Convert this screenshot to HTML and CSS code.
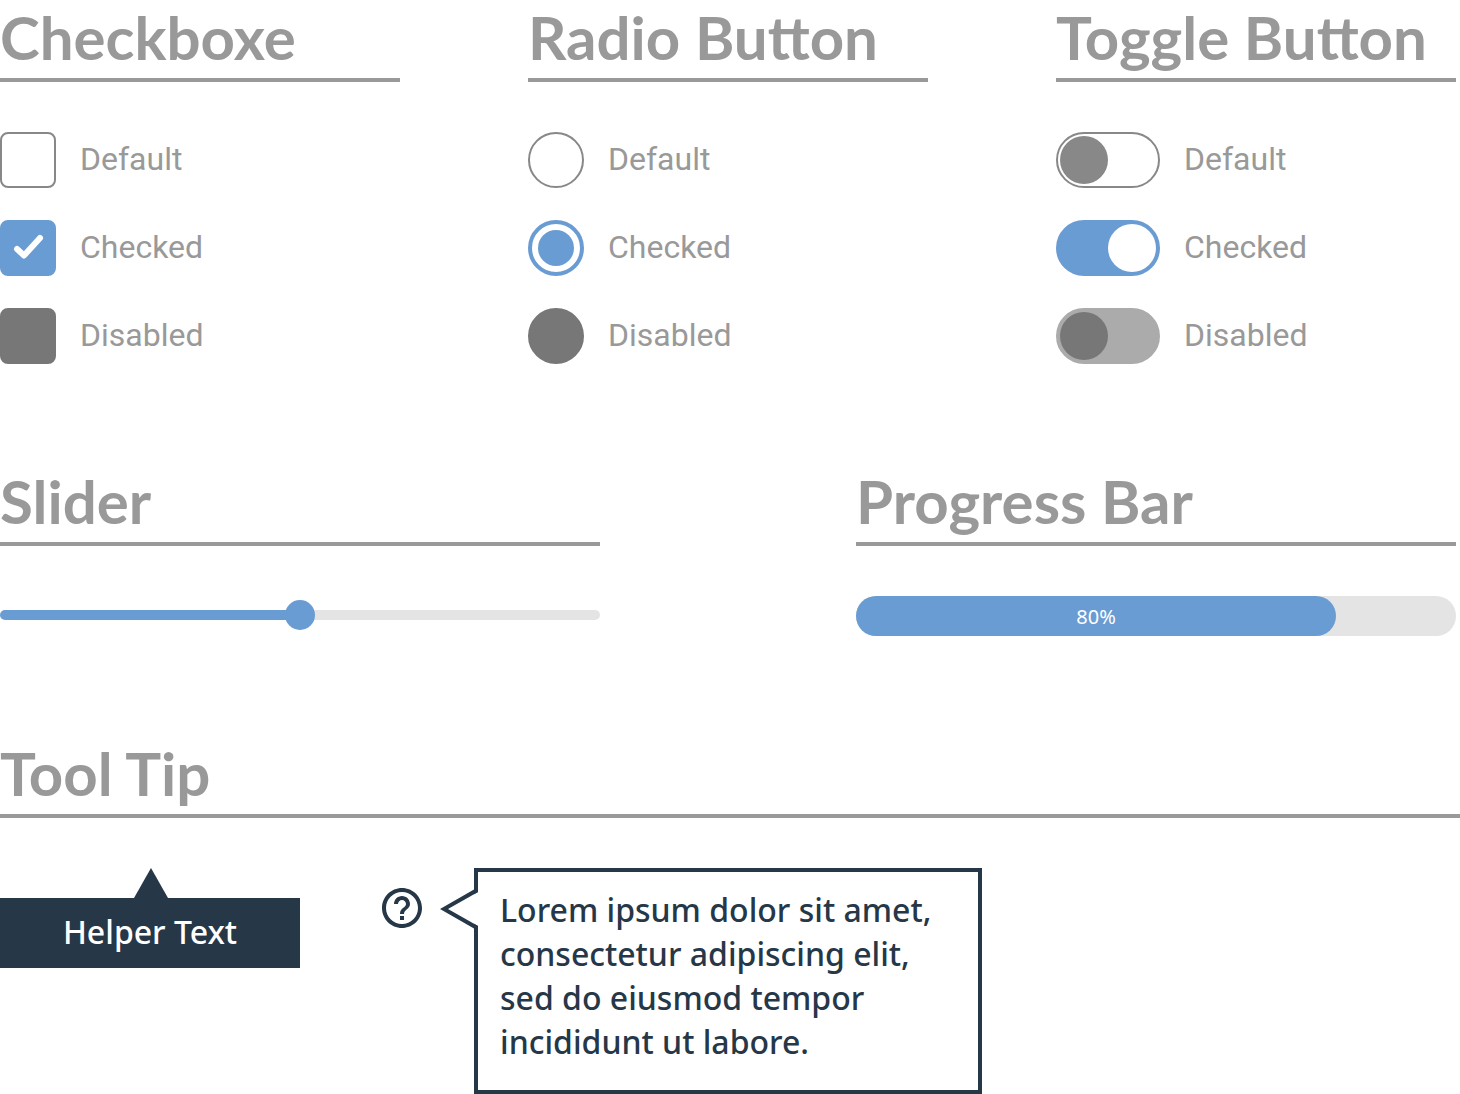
FILE: index.html
```html
<!DOCTYPE html>
<html lang="en">
<head>
  <meta charset="utf-8">
  <meta name="viewport" content="width=device-width, initial-scale=1">
  <title>Form Controls</title>
  <link rel="stylesheet" href="styles.css">
</head>
<body>
  <main class="page">
    <div class="row row-three">
      <section>
        <h2 class="heading">Checkboxe</h2>
        <div class="options">
          <label class="option"><input class="box" type="checkbox"><span>Default</span></label>
          <label class="option">
            <span class="check">
              <input class="box" type="checkbox" checked>
              <svg class="tick" viewBox="0 0 56 56" aria-hidden="true"><path d="M17 29L24 35.500L40 18"/></svg>
            </span>
            <span>Checked</span>
          </label>
          <label class="option"><input class="box" type="checkbox" disabled><span>Disabled</span></label>
        </div>
      </section>
      <section>
        <h2 class="heading">Radio Button</h2>
        <div class="options">
          <label class="option"><input class="radio" type="radio" name="choice"><span>Default</span></label>
          <label class="option"><input class="radio" type="radio" name="choice" checked><span>Checked</span></label>
          <label class="option"><input class="radio" type="radio" name="choice" disabled><span>Disabled</span></label>
        </div>
      </section>
      <section>
        <h2 class="heading">Toggle Button</h2>
        <div class="options">
          <label class="option"><input class="toggle" type="checkbox" role="switch"><span>Default</span></label>
          <label class="option"><input class="toggle" type="checkbox" role="switch" checked><span>Checked</span></label>
          <label class="option"><input class="toggle" type="checkbox" role="switch" disabled><span>Disabled</span></label>
        </div>
      </section>
    </div>

    <div class="row row-two">
      <section>
        <h2 class="heading"><label for="slider">Slider</label></h2>
        <input class="slider" id="slider" type="range" min="0" max="100" value="50">
      </section>
      <section>
        <h2 class="heading"><label for="progress">Progress Bar</label></h2>
        <div class="progress">
          <progress class="progress-bar" id="progress" max="100" value="80"></progress>
          <span class="progress-text" style="width: 80%">80%</span>
        </div>
      </section>
    </div>

    <section>
      <h2 class="heading">Tool Tip</h2>
      <div class="tips">
        <div class="helper" role="tooltip">Helper Text</div>
        <div class="help">
          <button class="help-button" type="button" aria-label="Help" aria-describedby="help-text">
            <svg class="help-icon" viewBox="2 2 20 20" aria-hidden="true"><path d="M11 18h2v-2h-2v2zm1-16C6.480 2 2 6.480 2 12s4.480 10 10 10 10-4.480 10-10S17.520 2 12 2zm0 18c-4.410 0-8-3.590-8-8s3.590-8 8-8 8 3.590 8 8-3.590 8-8 8zm0-14c-2.210 0-4 1.790-4 4h2c0-1.100.900-2 2-2s2 .900 2 2c0 2-3 1.750-3 5h2c0-2.250 3-2.500 3-5 0-2.210-1.790-4-4-4z"/></svg>
          </button>
          <div class="bubble" id="help-text" role="tooltip">
            <svg class="pointer" viewBox="0 0 38 42" aria-hidden="true">
              <path class="pointer-fill" d="M38 4L8 21L38 38z"/>
              <path class="pointer-line" d="M0 21L34 1.500H38V4L8 21L38 38V40.500H34z"/>
            </svg>
            Lorem ipsum dolor sit amet, consectetur adipiscing elit, sed do eiusmod tempor incididunt ut labore.
          </div>
        </div>
      </div>
    </section>
  </main>
</body>
</html>
```

FILE: styles.css
```css
:root {
  --grey: #999;
  --line: #888;
  --disabled: #777;
  --blue: #699cd3;
  --track: #e4e4e4;
  --navy: #263748;
}

* {
  box-sizing: border-box;
}

body {
  margin: 0;
  background: #fff;
  color: var(--grey);
  font-family: Roboto, sans-serif;
  font-size: 32px;
}

input {
  margin: 0;
}

.page {
  display: flex;
  flex-direction: column;
  gap: 100px;
}

.row {
  display: grid;
  padding-right: 4px;
}

.row-three {
  grid-template-columns: repeat(3, minmax(0, 1fr));
  gap: 128px;
}

.row-two {
  grid-template-columns: repeat(2, minmax(0, 1fr));
  gap: 256px;
}

.heading {
  margin: 0 0 50px;
  padding-bottom: 4px;
  border-bottom: 4px solid var(--grey);
  font: 700 60px/74px Lato, sans-serif;
  white-space: nowrap;
}

/* Checkboxes, radio buttons and toggles */

.options {
  display: flex;
  flex-direction: column;
  gap: 32px;
}

.option {
  display: flex;
  align-items: flex-start;
  gap: 24px;
  line-height: 54px;
}

.box,
.radio,
.toggle {
  appearance: none;
  display: block;
  flex: none;
  width: 56px;
  height: 56px;
  border: 2px solid var(--line);
  background: #fff;
}

.box {
  border-radius: 8px;
}

.box:checked {
  border-color: var(--blue);
  background: var(--blue);
}

.box:disabled,
.radio:disabled {
  border-color: var(--disabled);
  background: var(--disabled);
}

.check {
  position: relative;
}

.tick {
  position: absolute;
  inset: 0;
  fill: none;
  stroke: #fff;
  stroke-width: 6;
  stroke-linecap: round;
  stroke-linejoin: round;
  pointer-events: none;
}

.radio {
  border-radius: 50%;
}

.radio:checked {
  padding: 6px;
  border: 4px solid var(--blue);
  background: var(--blue) content-box;
}

.toggle {
  width: 104px;
  padding: 2px;
  border-radius: 28px;
}

.toggle::before {
  content: "";
  display: block;
  width: 48px;
  height: 48px;
  border-radius: 50%;
  background: var(--line);
}

.toggle:checked {
  border-color: var(--blue);
  background: var(--blue);
}

.toggle:checked::before {
  margin-left: auto;
  background: #fff;
}

.toggle:disabled {
  border-color: #ababab;
  background: #ababab;
}

.toggle:disabled::before {
  background: var(--disabled);
}

/* Slider and progress bar */

.slider {
  appearance: none;
  display: block;
  width: 100%;
  height: 38px;
  background: none;
}

.slider::-webkit-slider-runnable-track {
  height: 10px;
  border-radius: 5px;
  background: linear-gradient(to right, var(--blue) 50%, var(--track) 50%);
}

.slider::-webkit-slider-thumb {
  appearance: none;
  width: 30px;
  height: 30px;
  margin-top: -10px;
  border-radius: 50%;
  background: var(--blue);
}

.progress {
  position: relative;
}

.progress-bar {
  appearance: none;
  display: block;
  width: 100%;
  height: 40px;
  border: 0;
}

.progress-bar::-webkit-progress-bar {
  border-radius: 20px;
  background: var(--track);
}

.progress-bar::-webkit-progress-value {
  border-radius: 20px;
  background: var(--blue);
}

.progress-text {
  position: absolute;
  inset: 0 auto 0 0;
  color: #fff;
  font: 20px/42px "Noto Sans", sans-serif;
  text-align: center;
}

/* Tooltips */

.tips {
  display: flex;
  align-items: flex-start;
  gap: 82px;
  font: 500 32px/44px "Noto Sans", sans-serif;
}

.helper {
  position: relative;
  flex: none;
  min-width: 300px;
  margin-top: 30px;
  padding: 12px 24px 14px;
  background: var(--navy);
  color: #fff;
  text-align: center;
}

.helper::before {
  content: "";
  position: absolute;
  bottom: 100%;
  left: 50%;
  width: 34px;
  height: 30px;
  margin-left: -16px;
  background: var(--navy);
  clip-path: polygon(50% 0, 100% 100%, 0 100%);
}

.help {
  display: flex;
  align-items: flex-start;
  gap: 52px;
}

.help-button {
  flex: none;
  margin: 20px 0 0;
  padding: 0;
  border: 0;
  background: none;
}

.help-icon {
  display: block;
  width: 40px;
  height: 40px;
  fill: var(--navy);
}

.bubble {
  position: relative;
  max-width: 508px;
  padding: 16px 22px 26px;
  border: 4px solid var(--navy);
  color: var(--navy);
}

.pointer {
  position: absolute;
  top: 16px;
  left: -38px;
  width: 38px;
  height: 42px;
}

.pointer-fill {
  fill: #fff;
}

.pointer-line {
  fill: var(--navy);
}
```
